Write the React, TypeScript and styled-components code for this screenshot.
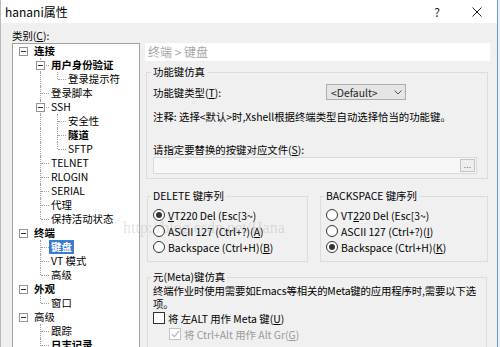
import React from 'react';
import styled, { createGlobalStyle } from 'styled-components';

const Global = createGlobalStyle`
  html, body { margin: 0; padding: 0; background: #f0f0f0; }
  body {
    font-family: "Noto Sans CJK SC", "Noto Sans", sans-serif;
    font-size: 10.4px;
    color: #000;
  }
  #root { width: 500px; height: 347px; }
`;

const Window = styled.div`
  position: relative;
  width: 498px;
  height: 347px;
  box-sizing: border-box;
  overflow: hidden;
  background: #f0f0f0;
  border-left: 1px solid #b9b9b9;
  border-right: 1px solid #6b9bd3;
  display: flex;
  flex-direction: column;
`;

const TitleBar = styled.div`
  height: 23px;
  flex-shrink: 0;
  background: #fff;
  display: flex;
  align-items: center;
  padding-left: 4px;
`;

const TitleText = styled.span`
  flex: 1;
  font-size: 12px;
  line-height: 23px;
`;

const CaptionButton = styled.span`
  width: 40px;
  height: 23px;
  display: flex;
  align-items: center;
  justify-content: center;
  font-size: 12px;
  color: #222;
`;

const Body = styled.div`
  flex: 1;
  min-height: 0;
  display: flex;
  flex-direction: column;
  padding: 6px 0 0 11px;
`;

const CategoryLabel = styled.div`
  height: 14px;
  line-height: 14px;
`;

const Main = styled.div`
  flex: 1;
  min-height: 0;
  display: flex;
  gap: 5px;
`;

const Tree = styled.div`
  width: 128px;
  height: 320px;
  flex-shrink: 0;
  box-sizing: border-box;
  border: 1px solid #a3a3a3;
  background: #fff;
  padding: 0 0 0 2px;
  overflow: hidden;
`;

const TreeRow = styled.div`
  display: flex;
  align-items: center;
  height: 14px;
  white-space: nowrap;
`;

const Cell = styled.span<{ $up: boolean; $down: boolean; $right: boolean }>`
  position: relative;
  width: 17px;
  height: 14px;
  flex-shrink: 0;
  &::before {
    content: '';
    display: ${(p) => (p.$up || p.$down ? 'block' : 'none')};
    position: absolute;
    left: 8px;
    top: ${(p) => (p.$up ? '0' : '7px')};
    bottom: ${(p) => (p.$down ? '0' : '7px')};
    border-left: 1px dotted #a0a0a0;
  }
  &::after {
    content: '';
    display: ${(p) => (p.$right ? 'block' : 'none')};
    position: absolute;
    left: 9px;
    right: 0;
    top: 7px;
    border-top: 1px dotted #a0a0a0;
  }
`;

const Expander = styled.span`
  position: absolute;
  left: 4px;
  top: 3px;
  width: 9px;
  height: 9px;
  box-sizing: border-box;
  border: 1px solid #959595;
  background: #fff;
  z-index: 1;
  &::after {
    content: '';
    position: absolute;
    left: 1px;
    right: 1px;
    top: 3px;
    height: 1px;
    background: #333;
  }
`;

const NodeLabel = styled.span<{ $bold?: boolean; $selected?: boolean }>`
  padding: 0 2px;
  height: 14px;
  line-height: 14px;
  font-weight: ${(p) => (p.$bold ? 700 : 400)};
  background: ${(p) => (p.$selected ? '#3a7bd5' : 'transparent')};
  color: ${(p) => (p.$selected ? '#fff' : '#000')};
`;

const Right = styled.div`
  width: 345px;
  display: flex;
  flex-direction: column;
`;

const Breadcrumb = styled.div`
  height: 18px;
  flex-shrink: 0;
  background: #fff;
  color: #a6a6a6;
  font-size: 12px;
  line-height: 18px;
  padding-left: 3px;
`;

const Group = styled.fieldset`
  box-sizing: border-box;
  min-width: 0;
  margin: 0;
  border: 1px solid #dcdcdc;
  padding: 0 5px 6px 5px;
`;

const FuncGroup = styled(Group)`
  width: 342px;
  margin: 4px 0 0 1px;
  padding: 0 5px 4px 6px;
`;

const KeyGroup = styled(Group)<{ $w: number }>`
  width: ${(p) => p.$w}px;
  flex-shrink: 0;
`;

const MetaGroup = styled(Group)`
  width: 340px;
  margin: 8px 0 0 2px;
`;

const Legend = styled.legend`
  padding: 0 2px;
  margin-left: -2px;
  line-height: 14px;
  height: 14px;
`;

const FuncTypeRow = styled.div`
  margin-top: 5px;
  height: 16px;
  display: grid;
  grid-template-columns: 173px 80px;
  align-items: center;
`;

const Select = styled.div`
  width: 80px;
  height: 16px;
  box-sizing: border-box;
  border: 1px solid #adadad;
  background: #e5e5e5;
  display: flex;
  align-items: center;
  justify-content: space-between;
  padding: 0 3px 0 4px;
  color: #222;
`;

const TextLine = styled.div<{ $mt?: number }>`
  margin-top: ${(p) => p.$mt ?? 0}px;
  line-height: 14px;
  height: 14px;
  white-space: nowrap;
`;

const FileField = styled.div`
  width: 324px;
  height: 17px;
  box-sizing: border-box;
  border: 1px solid #d9d9d9;
  background: #f7f7f7;
  display: flex;
  justify-content: flex-end;
  align-items: center;
  padding-right: 1px;
`;

const BrowseButton = styled.div`
  width: 15px;
  height: 13px;
  box-sizing: border-box;
  border: 1px solid #c4c4c4;
  background: #eeeeee;
  color: #808080;
  font-size: 9px;
  line-height: 9px;
  text-align: center;
`;

const KeyRow = styled.div`
  display: flex;
  gap: 12px;
  margin: 10px 0 0 2px;
`;

const OptionList = styled.div`
  padding-top: 4px;
  display: flex;
  flex-direction: column;
`;

const OptionRow = styled.div<{ $indent?: number; $disabled?: boolean }>`
  display: flex;
  align-items: center;
  gap: 3px;
  height: 16px;
  padding-left: ${(p) => p.$indent ?? 0}px;
  white-space: nowrap;
  color: ${(p) => (p.$disabled ? '#9a9a9a' : '#000')};
`;

const RadioDot = styled.span<{ $on: boolean }>`
  width: 12px;
  height: 12px;
  box-sizing: border-box;
  border: 1px solid #333;
  border-radius: 50%;
  background: #fff;
  display: flex;
  align-items: center;
  justify-content: center;
  flex-shrink: 0;
  &::after {
    content: '';
    width: 6px;
    height: 6px;
    border-radius: 50%;
    background: ${(p) => (p.$on ? '#333' : 'transparent')};
  }
`;

const CheckBox = styled.span<{ $disabled?: boolean }>`
  width: 12px;
  height: 12px;
  box-sizing: border-box;
  border: 1px solid ${(p) => (p.$disabled ? '#c2c2c2' : '#333')};
  background: #fff;
  display: flex;
  align-items: center;
  justify-content: center;
  flex-shrink: 0;
`;

const MetaText = styled.div`
  line-height: 13px;
  white-space: nowrap;
  letter-spacing: -0.15px;
`;

const U = styled.span`
  text-decoration: underline;
`;

const Watermark = styled.div`
  position: absolute;
  left: 122px;
  top: 219px;
  font-family: "Liberation Serif", serif;
  font-size: 16px;
  color: rgba(110, 110, 110, 0.2);
  white-space: nowrap;
  pointer-events: none;
`;

type TreeNode = { label: string; bold?: boolean; selected?: boolean; children?: TreeNode[] };
type CellSpec = { up: boolean; down: boolean; right: boolean; box: boolean };
type Flat = { node: TreeNode; cells: CellSpec[] };

const treeData: TreeNode[] = [
  {
    label: '连接',
    bold: true,
    children: [
      { label: '用户身份验证', bold: true, children: [{ label: '登录提示符' }] },
      { label: '登录脚本' },
      {
        label: 'SSH',
        children: [{ label: '安全性' }, { label: '隧道', bold: true }, { label: 'SFTP' }],
      },
      { label: 'TELNET' },
      { label: 'RLOGIN' },
      { label: 'SERIAL' },
      { label: '代理' },
      { label: '保持活动状态' },
    ],
  },
  {
    label: '终端',
    bold: true,
    children: [{ label: '键盘', bold: true, selected: true }, { label: 'VT 模式' }, { label: '高级' }],
  },
  { label: '外观', bold: true, children: [{ label: '窗口' }] },
  {
    label: '高级',
    children: [{ label: '跟踪' }, { label: '日志记录', bold: true }, { label: '响铃' }],
  },
  { label: '文件传输', bold: true },
];

function flatten(nodes: TreeNode[], level: number, trail: boolean[], out: Flat[]) {
  nodes.forEach((n, i) => {
    const hasNext = i < nodes.length - 1;
    const hasKids = !!n.children && n.children.length > 0;
    const cells: CellSpec[] = trail.map((t, k) => ({
      up: k > 0 && t,
      down: k > 0 && t,
      right: false,
      box: false,
    }));
    cells.push(
      level === 0
        ? { up: false, down: false, right: false, box: hasKids }
        : { up: true, down: hasNext, right: true, box: hasKids }
    );
    out.push({ node: n, cells });
    if (hasKids) flatten(n.children!, level + 1, [...trail, hasNext], out);
  });
}

const flatTree: Flat[] = [];
flatten(treeData, 0, [], flatTree);

const Radio = ({ on, children }: { on: boolean; children: React.ReactNode }) => (
  <OptionRow>
    <RadioDot $on={on} />
    <span>{children}</span>
  </OptionRow>
);

export default function App() {
  return (
    <>
      <Global />
      <Window>
        <TitleBar>
          <TitleText>hanani属性</TitleText>
          <CaptionButton>?</CaptionButton>
          <CaptionButton>
            <svg width="10" height="10" viewBox="0 0 10 10">
              <path d="M0.5 0.5 L9.5 9.5 M9.5 0.5 L0.5 9.5" stroke="#222" strokeWidth="1" fill="none" />
            </svg>
          </CaptionButton>
        </TitleBar>
        <Body>
          <CategoryLabel>
            类别(<U>C</U>):
          </CategoryLabel>
          <Main>
            <Tree>
              {flatTree.map((r, idx) => (
                <TreeRow key={idx}>
                  {r.cells.map((c, k) => (
                    <Cell key={k} $up={c.up} $down={c.down} $right={c.right}>
                      {c.box && <Expander />}
                    </Cell>
                  ))}
                  <NodeLabel $bold={r.node.bold} $selected={r.node.selected}>
                    {r.node.label}
                  </NodeLabel>
                </TreeRow>
              ))}
            </Tree>
            <Right>
              <Breadcrumb>终端 &gt; 键盘</Breadcrumb>
              <FuncGroup>
                <Legend>功能键仿真</Legend>
                <FuncTypeRow>
                  <span>
                    功能键类型(<U>T</U>):
                  </span>
                  <Select>
                    <span>&lt;Default&gt;</span>
                    <svg width="8" height="5" viewBox="0 0 8 5">
                      <path d="M0.5 0.5 L4 4 L7.5 0.5" stroke="#555" strokeWidth="1" fill="none" />
                    </svg>
                  </Select>
                </FuncTypeRow>
                <TextLine $mt={10}>注释: 选择&lt;默认&gt;时,Xshell根据终端类型自动选择恰当的功能键。</TextLine>
                <TextLine $mt={19}>
                  请指定要替换的按键对应文件(<U>S</U>):
                </TextLine>
                <FileField>
                  <BrowseButton>...</BrowseButton>
                </FileField>
              </FuncGroup>
              <KeyRow>
                <KeyGroup $w={161}>
                  <Legend>DELETE 键序列</Legend>
                  <OptionList>
                    <Radio on>
                      <U>V</U>T220 Del (Esc[3~)
                    </Radio>
                    <Radio on={false}>
                      ASCII 127 (Ctrl+?)(<U>A</U>)
                    </Radio>
                    <Radio on={false}>
                      Backspace (Ctrl+H)(<U>B</U>)
                    </Radio>
                  </OptionList>
                </KeyGroup>
                <KeyGroup $w={168}>
                  <Legend>BACKSPACE 键序列</Legend>
                  <OptionList>
                    <Radio on={false}>
                      VT<U>2</U>20 Del (Esc[3~)
                    </Radio>
                    <Radio on={false}>
                      ASCII 127 (Ctrl+?)(<U>I</U>)
                    </Radio>
                    <Radio on>
                      Backspace (Ctrl+H)(<U>K</U>)
                    </Radio>
                  </OptionList>
                </KeyGroup>
              </KeyRow>
              <MetaGroup>
                <Legend>元(Meta)键仿真</Legend>
                <MetaText>终端作业时使用需要如Emacs等相关的Meta键的应用程序时,需要以下选</MetaText>
                <MetaText>项。</MetaText>
                <OptionRow>
                  <CheckBox />
                  <span>
                    将 左ALT 用作 Meta 键(<U>U</U>)
                  </span>
                </OptionRow>
                <OptionRow $indent={16} $disabled>
                  <CheckBox $disabled>
                    <svg width="9" height="8" viewBox="0 0 9 8">
                      <path d="M0.8 4.2 L3.3 6.6 L8.2 0.9" stroke="#b8b8b8" strokeWidth="1.3" fill="none" />
                    </svg>
                  </CheckBox>
                  <span>
                    将 Ctrl+Alt 用作 Alt Gr(<U>G</U>)
                  </span>
                </OptionRow>
              </MetaGroup>
            </Right>
          </Main>
        </Body>
        <Watermark>http://blog.csdn.net/Hana</Watermark>
      </Window>
    </>
  );
}
